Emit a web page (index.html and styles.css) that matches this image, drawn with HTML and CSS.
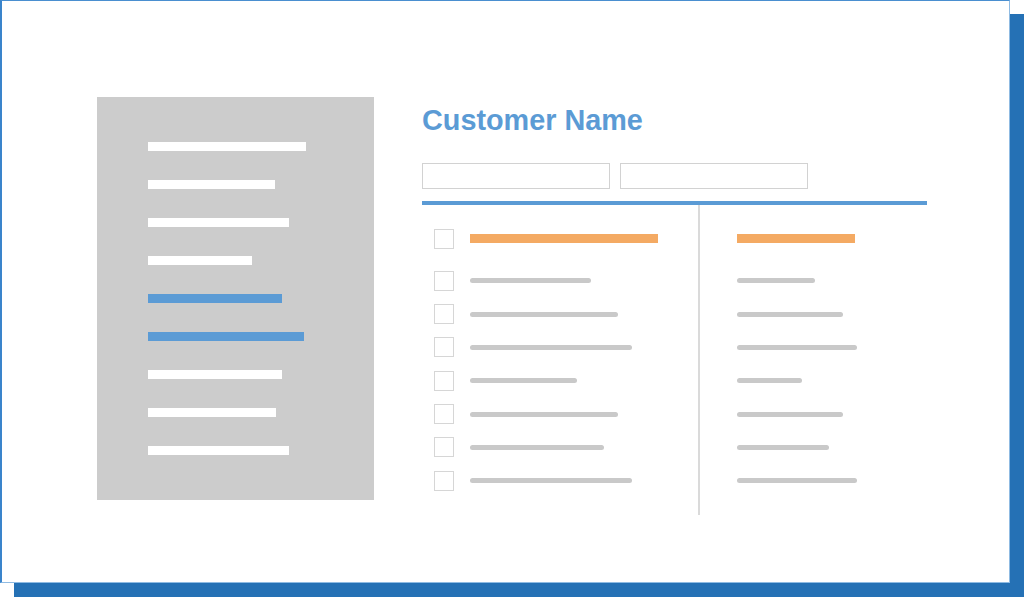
FILE: index.html
```html
<!DOCTYPE html>
<html>
<head>
<meta charset="utf-8">
<link rel="stylesheet" href="styles.css">
</head>
<body>
<div class="card">
  <div class="doc">
    <div class="doc-bar" style="width:158px"></div>
    <div class="doc-bar" style="width:127px"></div>
    <div class="doc-bar" style="width:141px"></div>
    <div class="doc-bar" style="width:104px"></div>
    <div class="doc-bar blue" style="width:134px"></div>
    <div class="doc-bar blue" style="width:156px"></div>
    <div class="doc-bar" style="width:134px"></div>
    <div class="doc-bar" style="width:128px"></div>
    <div class="doc-bar" style="width:141px"></div>
  </div>
  <div class="main">
    <h1 class="title">Customer Name</h1>
    <div class="inputs">
      <div class="input"></div>
      <div class="input"></div>
    </div>
    <div class="rule"></div>
    <div class="cols">
      <div class="col left">
        <div class="row head"><span class="box"></span><span class="obar" style="width:188px"></span></div>
        <div class="rows">
          <div class="row"><span class="box"></span><span class="gbar" style="width:121px"></span></div>
          <div class="row"><span class="box"></span><span class="gbar" style="width:148px"></span></div>
          <div class="row"><span class="box"></span><span class="gbar" style="width:162px"></span></div>
          <div class="row"><span class="box"></span><span class="gbar" style="width:107px"></span></div>
          <div class="row"><span class="box"></span><span class="gbar" style="width:148px"></span></div>
          <div class="row"><span class="box"></span><span class="gbar" style="width:134px"></span></div>
          <div class="row"><span class="box"></span><span class="gbar" style="width:162px"></span></div>
        </div>
      </div>
      <div class="col right">
        <div class="row head"><span class="obar" style="width:118px"></span></div>
        <div class="rows">
          <div class="row"><span class="gbar" style="width:78px"></span></div>
          <div class="row"><span class="gbar" style="width:106px"></span></div>
          <div class="row"><span class="gbar" style="width:120px"></span></div>
          <div class="row"><span class="gbar" style="width:65px"></span></div>
          <div class="row"><span class="gbar" style="width:106px"></span></div>
          <div class="row"><span class="gbar" style="width:92px"></span></div>
          <div class="row"><span class="gbar" style="width:120px"></span></div>
        </div>
      </div>
    </div>
  </div>
</div>
</body>
</html>
```
FILE: styles.css
```css
html, body {
  margin: 0;
  padding: 0;
  background: #ffffff;
  width: 1024px;
  height: 597px;
  overflow: hidden;
}

.card {
  box-sizing: border-box;
  width: 1010px;
  height: 583px;
  background: #ffffff;
  border: 1px solid #4a8fd0;
  border-left: 2px solid #3a84cb;
  border-right-color: #8fbbe3;
  border-bottom-color: #8fbbe3;
  box-shadow: 14px 14px 0 0 #2571b5;
  display: flex;
  align-items: flex-start;
  padding: 96px 0 0 95px;
  font-family: "Liberation Sans", Arial, sans-serif;
}

.doc {
  box-sizing: border-box;
  width: 277px;
  height: 403px;
  background: #cccccc;
  padding: 45px 0 0 51px;
  display: flex;
  flex-direction: column;
  gap: 29px;
}

.doc-bar {
  height: 9px;
  background: #ffffff;
}

.doc-bar.blue {
  background: #5b9bd5;
}

.main {
  margin-left: 48px;
  width: 505px;
  display: flex;
  flex-direction: column;
}

.title {
  margin: 9px 0 0 0;
  font-size: 28.8px;
  line-height: 1;
  font-weight: bold;
  color: #5b9bd5;
}

.inputs {
  display: flex;
  gap: 10px;
  margin-top: 28px;
}

.input {
  box-sizing: border-box;
  width: 188px;
  height: 26px;
  border: 1px solid #d2d2d2;
}

.rule {
  margin-top: 12px;
  height: 4px;
  background: #5b9bd5;
}

.cols {
  display: flex;
  height: 310px;
}

.col {
  box-sizing: border-box;
  padding-top: 24px;
}

.col.left {
  width: 276px;
  padding-left: 12px;
}

.col.right {
  width: 229px;
  border-left: 2px solid #dadada;
  padding-left: 37px;
}

.rows {
  margin-top: 22px;
  display: flex;
  flex-direction: column;
  gap: 13.33px;
}

.row {
  display: flex;
  align-items: center;
  height: 20px;
}

.box {
  box-sizing: border-box;
  width: 20px;
  height: 20px;
  border: 1.5px solid #d6d6d6;
  margin-right: 16px;
  flex: none;
}

.obar {
  height: 9px;
  background: #f4aa63;
}

.gbar {
  height: 5px;
  border-radius: 3px;
  background: #c9c9c9;
}
```
